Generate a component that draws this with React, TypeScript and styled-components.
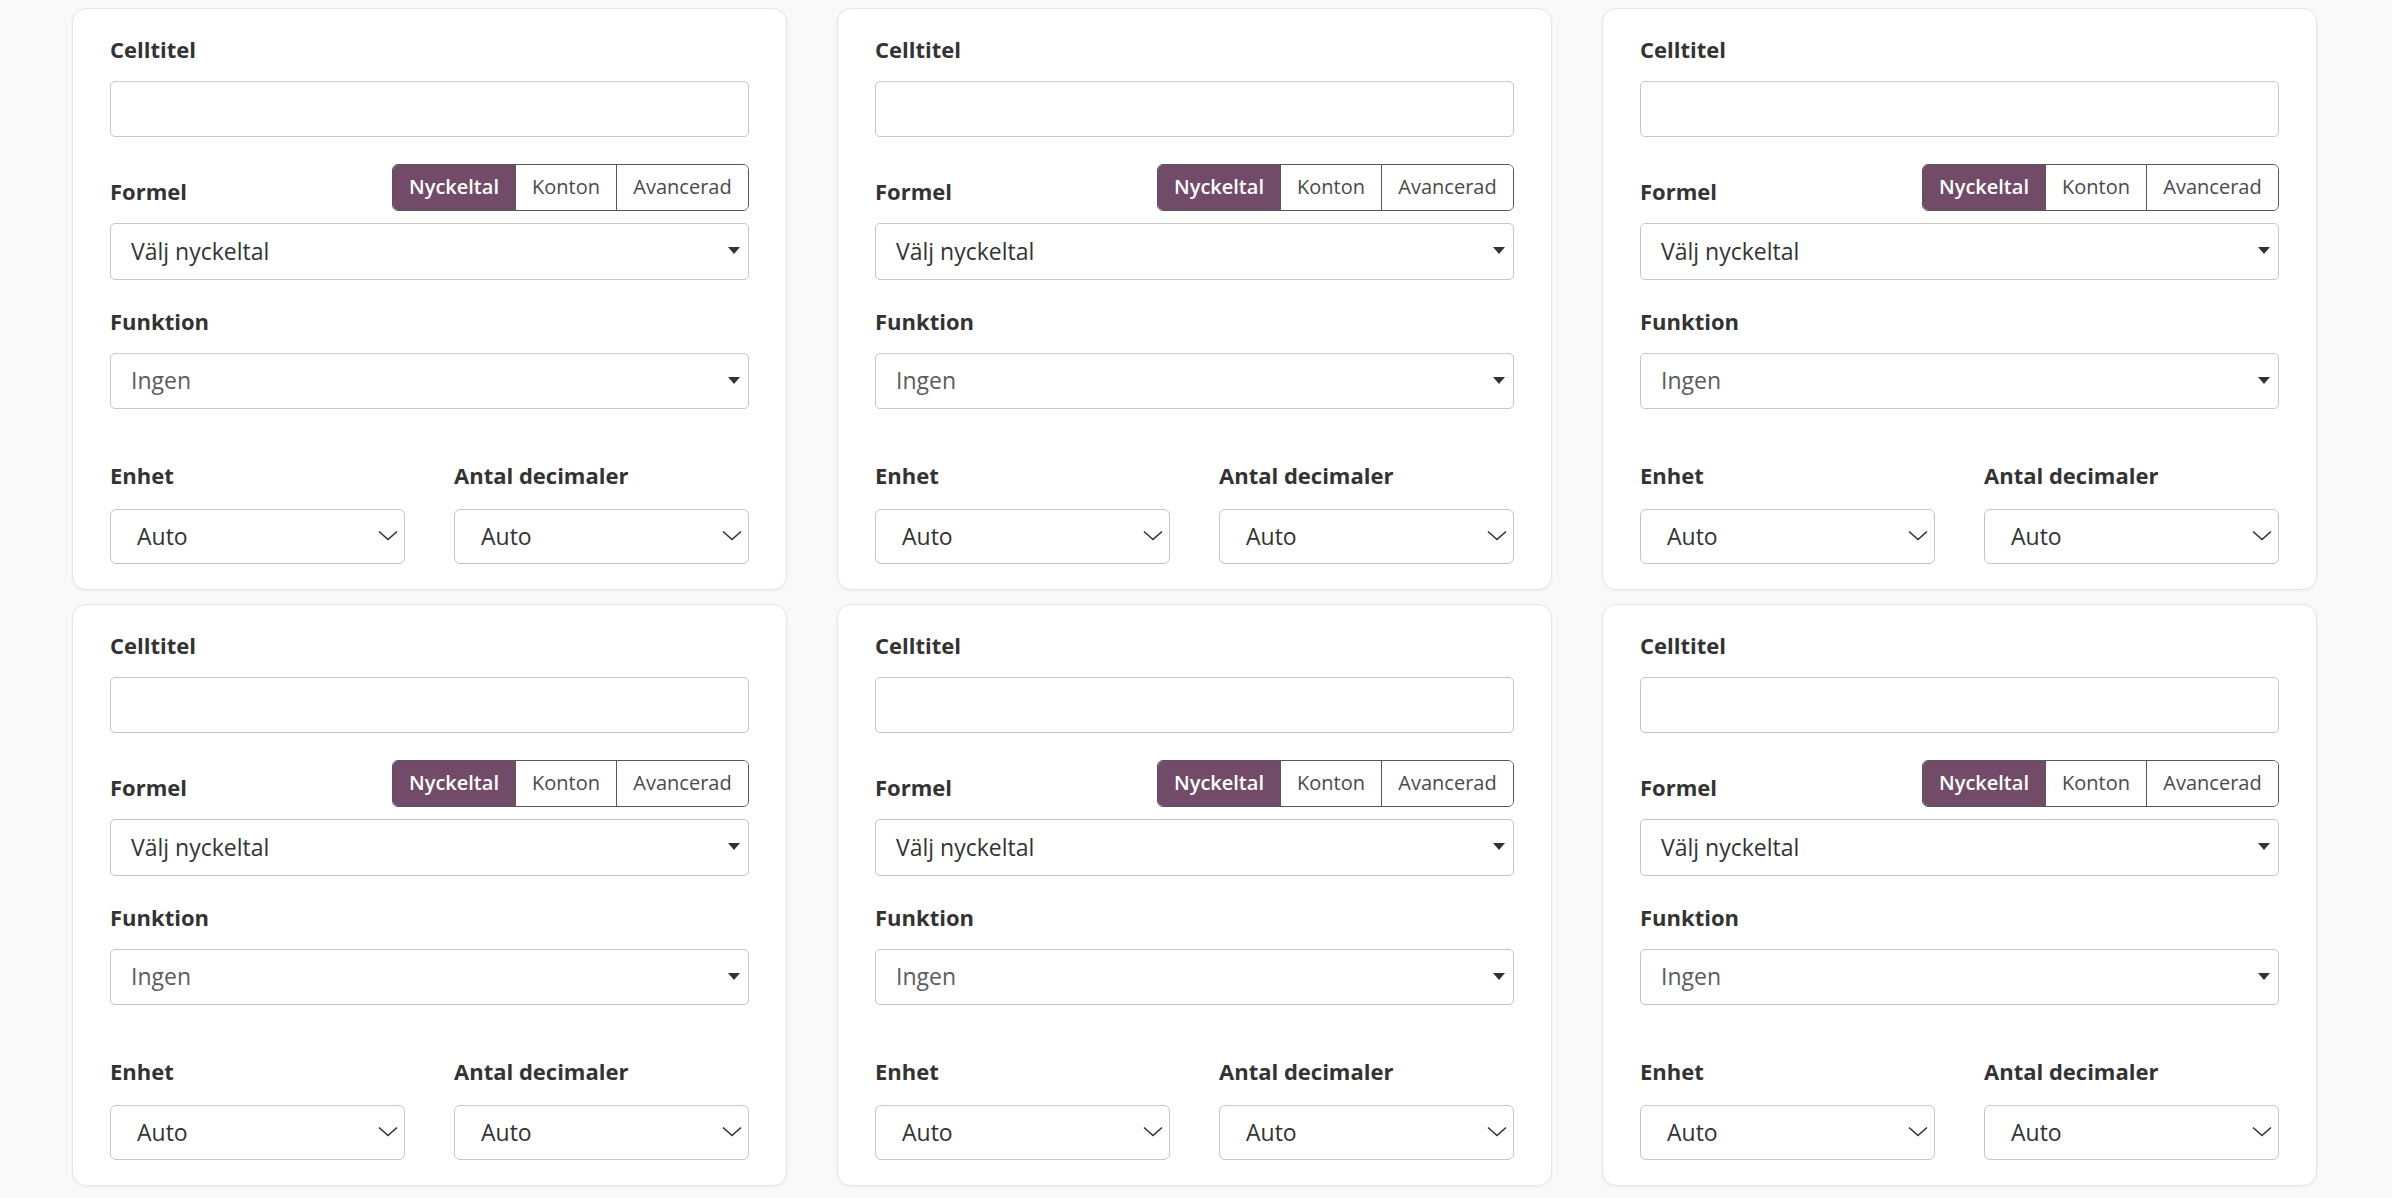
import React from "react";
import styled, { createGlobalStyle } from "styled-components";

const Global = createGlobalStyle`
  html, body { margin: 0; padding: 0; background: #f9f9f9; }
  body {
    font-family: "Open Sans", "Noto Sans", sans-serif;
    color: #333;
    font-variant-ligatures: none;
  }
  * { box-sizing: border-box; }
`;

const Page = styled.div`
  width: 2245px;
  margin: 0 0 0 72px;
  padding: 8px 0 11px;
  display: grid;
  grid-template-columns: repeat(3, 715px);
  column-gap: 50px;
  row-gap: 14px;
`;

const Card = styled.div`
  background: #fff;
  border: 1px solid #e6e6e6;
  border-radius: 14px;
  padding: 25px 37px;
  box-shadow: 0 1px 3px rgba(0, 0, 0, 0.05);
  display: flex;
  flex-direction: column;
`;

const Label = styled.div<{ $mt?: number; $mb?: number }>`
  font-size: 22px;
  font-weight: 700;
  line-height: 31.5px;
  color: #333;
  margin-top: ${(p) => p.$mt ?? 0}px;
  margin-bottom: ${(p) => p.$mb ?? 0}px;
`;

const TextInput = styled.input`
  display: block;
  width: 100%;
  height: 56px;
  margin-top: 15.5px;
  border: 1.5px solid #c6c6c6;
  border-radius: 5px;
  background: #fff;
  font: inherit;
  font-size: 23px;
  padding: 0 20px;
  outline: none;
`;

const FormulaRow = styled.div`
  margin-top: 27px;
  display: flex;
  justify-content: space-between;
  align-items: flex-end;
`;

const Segmented = styled.div`
  display: flex;
  height: 47px;
  border: 1.5px solid #585858;
  border-radius: 6px;
  overflow: hidden;
`;

const SegButton = styled.button<{ $active?: boolean; $w: number }>`
  width: ${(p) => p.$w}px;
  height: 100%;
  border: none;
  border-left: ${(p) => (p.$active ? "none" : "1.5px solid #585858")};
  background: ${(p) => (p.$active ? "#714B67" : "#fff")};
  color: ${(p) => (p.$active ? "#fff" : "#4a4a4a")};
  font-family: inherit;
  font-size: 20px;
  font-weight: ${(p) => (p.$active ? 600 : 400)};
  padding: 0 0 2px;
  &:first-child { border-left: none; }
`;

const SelectBox = styled.div<{ $mt: number; $h: number; $muted?: boolean }>`
  margin-top: ${(p) => p.$mt}px;
  height: ${(p) => p.$h}px;
  border: 1.5px solid #c6c6c6;
  border-radius: 5px;
  background: #fff;
  display: flex;
  align-items: center;
  justify-content: space-between;
  padding: 0 8px 2px 20px;
  font-size: 23px;
  color: ${(p) => (p.$muted ? "#5c5c5c" : "#333")};
`;

const BottomGrid = styled.div`
  margin-top: 51px;
  display: grid;
  grid-template-columns: 1fr 1fr;
  column-gap: 49px;
`;

const NativeSelect = styled.div`
  margin-top: 17.5px;
  height: 55px;
  border: 1.5px solid #c6c6c6;
  border-radius: 6px;
  background: #fff;
  display: flex;
  align-items: center;
  justify-content: space-between;
  padding: 0 6px 2px 26px;
  font-size: 23px;
  color: #333;
`;

const Caret = () => (
  <svg width="12" height="7" viewBox="0 0 12 7">
    <path d="M0 0 L12 0 L6 7 Z" fill="#333" />
  </svg>
);

const Chevron = () => (
  <svg width="20" height="11" viewBox="0 0 20 11">
    <path d="M1 1.5 L10 9.5 L19 1.5" fill="none" stroke="#333" strokeWidth="1.6" />
  </svg>
);

const CellCard = () => (
  <Card>
    <Label>Celltitel</Label>
    <TextInput type="text" />
    <FormulaRow>
      <Label $mb={3.5}>Formel</Label>
      <Segmented>
        <SegButton $active $w={122}>Nyckeltal</SegButton>
        <SegButton $w={101}>Konton</SegButton>
        <SegButton $w={132}>Avancerad</SegButton>
      </Segmented>
    </FormulaRow>
    <SelectBox $mt={12} $h={57}>
      <span>Välj nyckeltal</span>
      <Caret />
    </SelectBox>
    <Label $mt={26}>Funktion</Label>
    <SelectBox $mt={15.5} $h={56} $muted>
      <span>Ingen</span>
      <Caret />
    </SelectBox>
    <BottomGrid>
      <div>
        <Label>Enhet</Label>
        <NativeSelect>
          <span>Auto</span>
          <Chevron />
        </NativeSelect>
      </div>
      <div>
        <Label>Antal decimaler</Label>
        <NativeSelect>
          <span>Auto</span>
          <Chevron />
        </NativeSelect>
      </div>
    </BottomGrid>
  </Card>
);

export default function App() {
  return (
    <>
      <Global />
      <Page>
        {Array.from({ length: 6 }).map((_, i) => (
          <CellCard key={i} />
        ))}
      </Page>
    </>
  );
}
